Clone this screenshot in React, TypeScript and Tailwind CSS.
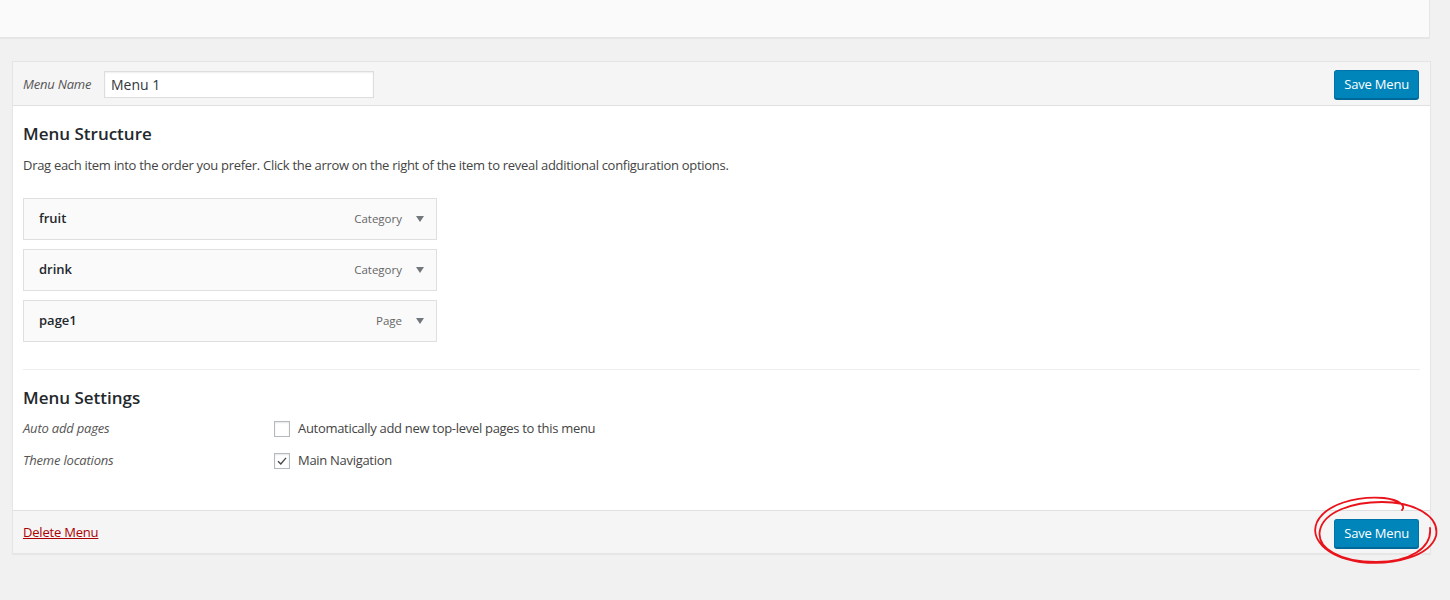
import React from 'react';

const font = { fontFamily: "'Open Sans', 'Noto Sans', sans-serif" };

function SaveButton() {
  return (
    <button className="h-[29px] px-[9px] rounded-[3px] bg-[#0085ba] border border-[#0073aa] border-b-[#006799] shadow-[0_1px_0_#006799] text-white text-[13px] leading-none tracking-[-0.2px]">
      Save Menu
    </button>
  );
}

function MenuItem({ title, kind }: { title: string; kind: string }) {
  return (
    <div className="w-[414px] h-[42px] flex items-center justify-between bg-[#fafafa] border border-[#dfdfdf] pl-[15px] pr-[11px]">
      <span className="text-[13px] font-semibold text-[#23282d]">{title}</span>
      <span className="flex items-center gap-[13px]">
        <span className="text-[11.5px] text-[#666]">{kind}</span>
        <svg width="10" height="8" viewBox="0 0 10 8">
          <path d="M1 1 L9 1 L5 7 Z" fill="#72777c" />
        </svg>
      </span>
    </div>
  );
}

function Checkbox({ checked }: { checked?: boolean }) {
  return (
    <span className="w-[16px] h-[16px] border border-[#b4b9be] bg-white shadow-[inset_0_1px_2px_rgba(0,0,0,0.1)] flex items-center justify-center">
      {checked && (
        <svg width="12" height="12" viewBox="0 0 12 12">
          <path d="M2 6.2 L4.8 9 L10 2.8" fill="none" stroke="#444" strokeWidth="1.3" />
        </svg>
      )}
    </span>
  );
}

export default function App() {
  return (
    <div className="min-h-[600px] bg-[#f1f1f1] text-[#444]" style={font}>
      {/* top panel edge */}
      <div className="w-[1430px] h-[38px] bg-[#fafafa] border-r border-b border-[#e5e5e5] shadow-[0_1px_1px_rgba(0,0,0,0.04)]" />

      <div className="ml-[12px] mt-[23px] w-[1419px] border border-[#e5e5e5] shadow-[0_1px_1px_rgba(0,0,0,0.04)]">
        {/* header */}
        <div className="h-[44px] bg-[#f5f5f5] border-b border-[#dfdfdf] flex items-center justify-between pl-[10px] pr-[11px] pt-[2px]">
          <div className="flex items-center">
            <span className="italic text-[13px] text-[#555] w-[81px] tracking-[-0.2px]">Menu Name</span>
            <input
              readOnly
              value="Menu 1"
              className="w-[270px] h-[27px] border border-[#ddd] bg-white px-[6px] text-[14px] text-[#32373c] shadow-[inset_0_1px_2px_rgba(0,0,0,0.07)] outline-none"
            />
          </div>
          <SaveButton />
        </div>

        {/* body */}
        <div className="bg-white px-[10px] pb-[39px]">
          <h3 className="pt-[16px] text-[17px] font-semibold text-[#23282d] leading-[24px]">Menu Structure</h3>
          <p className="mt-[10px] text-[13px] leading-[18px] tracking-[-0.3px]">
            Drag each item into the order you prefer. Click the arrow on the right of the item to reveal additional configuration options.
          </p>
          <div className="mt-[24px] flex flex-col gap-[9px]">
            <MenuItem title="fruit" kind="Category" />
            <MenuItem title="drink" kind="Category" />
            <MenuItem title="page1" kind="Page" />
          </div>

          <div className="mt-[27px] border-t border-[#eee]" />

          <h3 className="mt-[16px] text-[17px] font-semibold text-[#23282d] leading-[24px]">Menu Settings</h3>
          <div className="mt-[9px] flex flex-col gap-[12px]">
            <div className="flex items-center h-[20px]">
              <span className="w-[251px] italic text-[13px] text-[#555] tracking-[-0.2px]">Auto add pages</span>
              <Checkbox />
              <span className="ml-[8px] text-[13px] tracking-[-0.3px]">Automatically add new top-level pages to this menu</span>
            </div>
            <div className="flex items-center h-[20px]">
              <span className="w-[251px] italic text-[13px] text-[#555] tracking-[-0.2px]">Theme locations</span>
              <Checkbox checked />
              <span className="ml-[8px] text-[13px] tracking-[-0.3px]">Main Navigation</span>
            </div>
          </div>
        </div>

        {/* footer */}
        <div className="h-[43px] bg-[#f5f5f5] border-t border-[#dfdfdf] flex items-center justify-between pl-[10px] pr-[11px] pt-[2px]">
          <a className="text-[13px] text-[#a00] underline tracking-[-0.2px]">Delete Menu</a>
          <div className="relative">
            <SaveButton />
            <svg
              className="absolute left-[-24px] top-[-25px] pointer-events-none"
              width="130"
              height="72"
              viewBox="0 0 130 72"
            >
              <path
                d="M92 16 C96 12 90 6 74 4 C46 2 16 10 7 28 C0 44 14 62 50 68 C84 72 120 62 126 42 C130 22 104 8 72 8 C42 8 14 18 10 36 C6 54 30 68 66 68 C100 68 122 54 120 34"
                fill="none"
                stroke="#e8131b"
                strokeWidth="1.8"
                strokeLinecap="round"
              />
            </svg>
          </div>
        </div>
      </div>
    </div>
  );
}
